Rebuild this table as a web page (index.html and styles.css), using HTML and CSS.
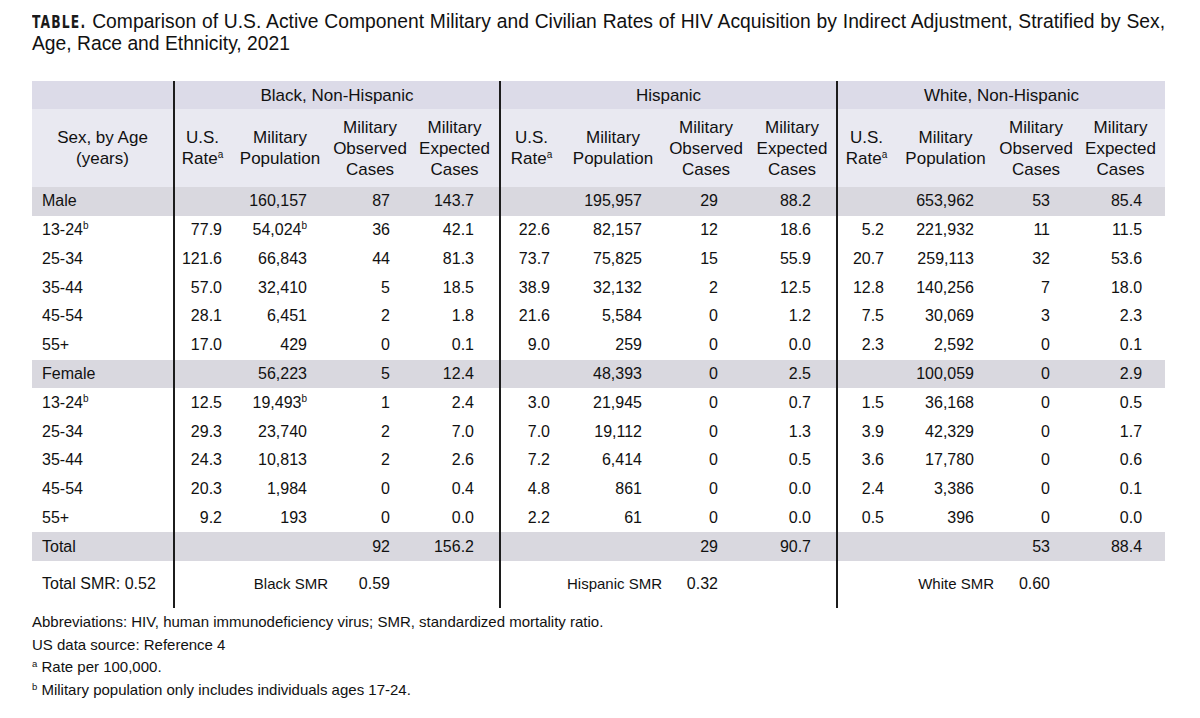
FILE: index.html
```html
<!DOCTYPE html>
<html lang="en">
<head>
<meta charset="utf-8">
<title>HIV Acquisition Table</title>
<link rel="stylesheet" href="styles.css">
</head>
<body>
<div class="page">
  <h1 class="title"><span class="line1"><span class="tag">TABLE.</span> Comparison of U.S. Active Component Military and Civilian Rates of HIV Acquisition by Indirect Adjustment, Stratified by Sex,</span> <span class="line2">Age, Race and Ethnicity, 2021</span></h1>

  <table class="data">
    <colgroup>
      <col class="c-label">
      <col class="c-b1"><col class="c-b2"><col class="c-b3"><col class="c-b4">
      <col class="c-h1"><col class="c-h2"><col class="c-h3"><col class="c-h4">
      <col class="c-w1"><col class="c-w2"><col class="c-w3"><col class="c-w4">
    </colgroup>
    <thead>
      <tr class="group-row">
        <th></th>
        <th colspan="4" class="gs">Black, Non-Hispanic</th>
        <th colspan="4" class="gs">Hispanic</th>
        <th colspan="4" class="gs">White, Non-Hispanic</th>
      </tr>
      <tr class="sub-row">
        <th>Sex, by Age<br>(years)</th>
        <th class="gs">U.S.<br>Rate<sup>a</sup></th>
        <th>Military<br>Population</th>
        <th>Military<br>Observed<br>Cases</th>
        <th>Military<br>Expected<br>Cases</th>
        <th class="gs">U.S.<br>Rate<sup>a</sup></th>
        <th>Military<br>Population</th>
        <th>Military<br>Observed<br>Cases</th>
        <th>Military<br>Expected<br>Cases</th>
        <th class="gs">U.S.<br>Rate<sup>a</sup></th>
        <th>Military<br>Population</th>
        <th>Military<br>Observed<br>Cases</th>
        <th>Military<br>Expected<br>Cases</th>
      </tr>
    </thead>
    <tbody>
      <tr class="total">
        <td class="lbl">Male</td>
        <td class="gs b1"></td><td class="b2">160,157</td><td class="b3">87</td><td class="b4">143.7</td>
        <td class="gs h1"></td><td class="h2">195,957</td><td class="h3">29</td><td class="h4">88.2</td>
        <td class="gs w1"></td><td class="w2">653,962</td><td class="w3">53</td><td class="w4">85.4</td>
      </tr>
      <tr>
        <td class="lbl">13-24<sup>b</sup></td>
        <td class="gs b1">77.9</td><td class="b2">54,024<sup>b</sup></td><td class="b3">36</td><td class="b4">42.1</td>
        <td class="gs h1">22.6</td><td class="h2">82,157</td><td class="h3">12</td><td class="h4">18.6</td>
        <td class="gs w1">5.2</td><td class="w2">221,932</td><td class="w3">11</td><td class="w4">11.5</td>
      </tr>
      <tr>
        <td class="lbl">25-34</td>
        <td class="gs b1">121.6</td><td class="b2">66,843</td><td class="b3">44</td><td class="b4">81.3</td>
        <td class="gs h1">73.7</td><td class="h2">75,825</td><td class="h3">15</td><td class="h4">55.9</td>
        <td class="gs w1">20.7</td><td class="w2">259,113</td><td class="w3">32</td><td class="w4">53.6</td>
      </tr>
      <tr>
        <td class="lbl">35-44</td>
        <td class="gs b1">57.0</td><td class="b2">32,410</td><td class="b3">5</td><td class="b4">18.5</td>
        <td class="gs h1">38.9</td><td class="h2">32,132</td><td class="h3">2</td><td class="h4">12.5</td>
        <td class="gs w1">12.8</td><td class="w2">140,256</td><td class="w3">7</td><td class="w4">18.0</td>
      </tr>
      <tr>
        <td class="lbl">45-54</td>
        <td class="gs b1">28.1</td><td class="b2">6,451</td><td class="b3">2</td><td class="b4">1.8</td>
        <td class="gs h1">21.6</td><td class="h2">5,584</td><td class="h3">0</td><td class="h4">1.2</td>
        <td class="gs w1">7.5</td><td class="w2">30,069</td><td class="w3">3</td><td class="w4">2.3</td>
      </tr>
      <tr>
        <td class="lbl">55+</td>
        <td class="gs b1">17.0</td><td class="b2">429</td><td class="b3">0</td><td class="b4">0.1</td>
        <td class="gs h1">9.0</td><td class="h2">259</td><td class="h3">0</td><td class="h4">0.0</td>
        <td class="gs w1">2.3</td><td class="w2">2,592</td><td class="w3">0</td><td class="w4">0.1</td>
      </tr>
      <tr class="total">
        <td class="lbl">Female</td>
        <td class="gs b1"></td><td class="b2">56,223</td><td class="b3">5</td><td class="b4">12.4</td>
        <td class="gs h1"></td><td class="h2">48,393</td><td class="h3">0</td><td class="h4">2.5</td>
        <td class="gs w1"></td><td class="w2">100,059</td><td class="w3">0</td><td class="w4">2.9</td>
      </tr>
      <tr>
        <td class="lbl">13-24<sup>b</sup></td>
        <td class="gs b1">12.5</td><td class="b2">19,493<sup>b</sup></td><td class="b3">1</td><td class="b4">2.4</td>
        <td class="gs h1">3.0</td><td class="h2">21,945</td><td class="h3">0</td><td class="h4">0.7</td>
        <td class="gs w1">1.5</td><td class="w2">36,168</td><td class="w3">0</td><td class="w4">0.5</td>
      </tr>
      <tr>
        <td class="lbl">25-34</td>
        <td class="gs b1">29.3</td><td class="b2">23,740</td><td class="b3">2</td><td class="b4">7.0</td>
        <td class="gs h1">7.0</td><td class="h2">19,112</td><td class="h3">0</td><td class="h4">1.3</td>
        <td class="gs w1">3.9</td><td class="w2">42,329</td><td class="w3">0</td><td class="w4">1.7</td>
      </tr>
      <tr>
        <td class="lbl">35-44</td>
        <td class="gs b1">24.3</td><td class="b2">10,813</td><td class="b3">2</td><td class="b4">2.6</td>
        <td class="gs h1">7.2</td><td class="h2">6,414</td><td class="h3">0</td><td class="h4">0.5</td>
        <td class="gs w1">3.6</td><td class="w2">17,780</td><td class="w3">0</td><td class="w4">0.6</td>
      </tr>
      <tr>
        <td class="lbl">45-54</td>
        <td class="gs b1">20.3</td><td class="b2">1,984</td><td class="b3">0</td><td class="b4">0.4</td>
        <td class="gs h1">4.8</td><td class="h2">861</td><td class="h3">0</td><td class="h4">0.0</td>
        <td class="gs w1">2.4</td><td class="w2">3,386</td><td class="w3">0</td><td class="w4">0.1</td>
      </tr>
      <tr>
        <td class="lbl">55+</td>
        <td class="gs b1">9.2</td><td class="b2">193</td><td class="b3">0</td><td class="b4">0.0</td>
        <td class="gs h1">2.2</td><td class="h2">61</td><td class="h3">0</td><td class="h4">0.0</td>
        <td class="gs w1">0.5</td><td class="w2">396</td><td class="w3">0</td><td class="w4">0.0</td>
      </tr>
      <tr class="total">
        <td class="lbl">Total</td>
        <td class="gs b1"></td><td class="b2"></td><td class="b3">92</td><td class="b4">156.2</td>
        <td class="gs h1"></td><td class="h2"></td><td class="h3">29</td><td class="h4">90.7</td>
        <td class="gs w1"></td><td class="w2"></td><td class="w3">53</td><td class="w4">88.4</td>
      </tr>
      <tr class="smr">
        <td class="lbl">Total SMR: 0.52</td>
        <td class="gs"></td><td class="smr-lbl">Black SMR</td><td class="b3">0.59</td><td></td>
        <td class="gs"></td><td class="smr-lbl">Hispanic SMR</td><td class="h3">0.32</td><td></td>
        <td class="gs"></td><td class="smr-lbl">White SMR</td><td class="w3">0.60</td><td></td>
      </tr>
    </tbody>
  </table>

  <div class="notes">
    <p>Abbreviations: HIV, human immunodeficiency virus; SMR, standardized mortality ratio.</p>
    <p>US data source: Reference 4</p>
    <p><sup>a</sup> Rate per 100,000.</p>
    <p><sup>b</sup> Military population only includes individuals ages 17-24.</p>
  </div>
</div>
</body>
</html>
```

FILE: styles.css
```css
html, body {
  margin: 0;
  padding: 0;
  background: #ffffff;
}

body {
  font-family: "Liberation Sans", Arial, sans-serif;
  color: #111111;
}

.page {
  padding: 11px 0 0 32px;
  width: 1133px;
}

.title {
  margin: 0;
  width: 1133px;
  font-size: 19.3px;
  font-weight: normal;
  line-height: 22px;
  color: #111;
}

.line1 {
  display: block;
  height: 22px;
  text-align: justify;
  text-align-last: justify;
}

.line2 {
  display: block;
}

.tag {
  display: inline-block;
  font-family: "DejaVu Sans Condensed", "DejaVu Sans", sans-serif;
  font-weight: bold;
  font-size: 18.5px;
  letter-spacing: 1.6px;
  line-height: 22px;
  color: #1a1a1a;
  transform: scaleX(0.74);
  transform-origin: left center;
  margin-right: -19px;
}

.data {
  margin-top: 26px;
  width: 1133px;
  border-collapse: collapse;
  table-layout: fixed;
  font-size: 16px;
}

.c-label { width: 142px; }
.c-b1 { width: 56px; }
.c-b2 { width: 100px; }
.c-b3 { width: 80px; }
.c-b4 { width: 90px; }
.c-h1 { width: 62px; }
.c-h2 { width: 102px; }
.c-h3 { width: 84px; }
.c-h4 { width: 89px; }
.c-w1 { width: 58px; }
.c-w2 { width: 101px; }
.c-w3 { width: 80px; }
.c-w4 { width: 89px; }

.data th,
.data td {
  padding: 0;
  white-space: nowrap;
}

.data th {
  font-size: 17px;
  font-weight: normal;
  text-align: center;
  vertical-align: middle;
  line-height: 21px;
}

.gs {
  border-left: 2px solid #1c1c1c;
}

.group-row th {
  background: #dcdbe8;
  height: 28px;
}

.sub-row th {
  background: #e9e9f1;
  height: 78px;
}

.data tbody td {
  height: 28.77px;
  line-height: 20px;
  text-align: right;
  vertical-align: middle;
}

.data tbody tr.total td {
  background: #d9d8df;
}

.data td.lbl {
  text-align: left;
  padding-left: 10px;
}

.b1 { padding-right: 8px !important; }
.b2 { padding-right: 23px !important; }
.b3 { padding-right: 20px !important; }
.b4 { padding-right: 25px !important; }
.h1 { padding-right: 12px !important; }
.h2 { padding-right: 22px !important; }
.h3 { padding-right: 30px !important; }
.h4 { padding-right: 25px !important; }
.w1 { padding-right: 11px !important; }
.w2 { padding-right: 22px !important; }
.w3 { padding-right: 26px !important; }
.w4 { padding-right: 23px !important; }

.data tbody tr.smr td {
  height: 47px;
  background: #ffffff;
}

.data td.smr-lbl {
  font-size: 15px;
  padding-right: 2px;
}

sup {
  font-size: 10px;
  line-height: 0;
  vertical-align: 6px;
}

.notes {
  margin-top: 3px;
  font-size: 15px;
}

.notes p {
  margin: 0;
  line-height: 22.7px;
}

.notes sup {
  font-size: 9.5px;
  vertical-align: 5px;
}
```
